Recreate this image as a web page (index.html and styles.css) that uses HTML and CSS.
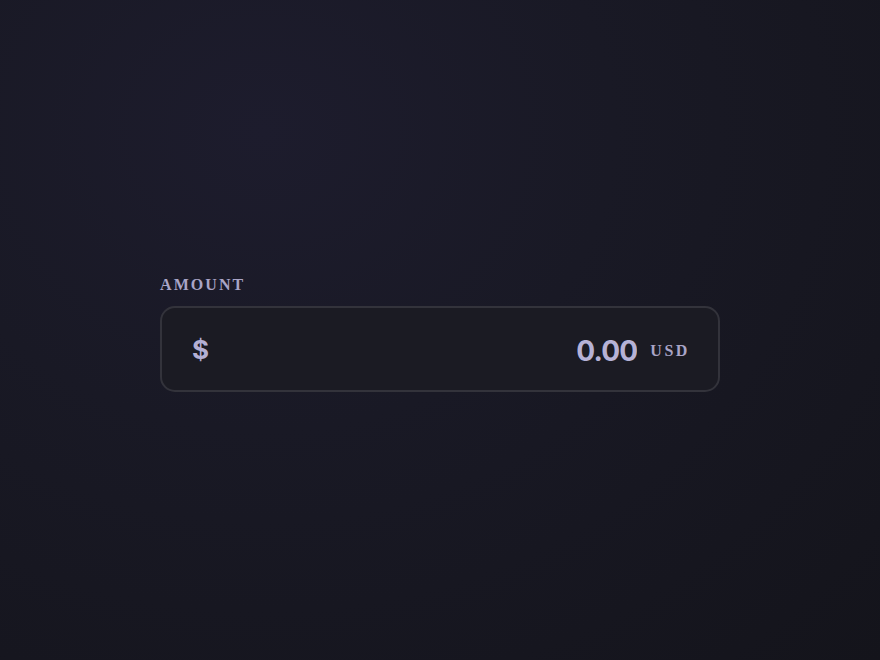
FILE: index.html
```html
<!DOCTYPE html>
<html lang="en">
<head>
    <meta charset="UTF-8">
    <meta name="viewport" content="width=device-width, initial-scale=1.0">
    <title>Amount</title>
    <link rel="stylesheet" href="styles.css">
</head>
<body>

    <div class="field">
        <label class="field-label" for="amount">Amount</label>
        <div class="amount-box">
            <span class="currency-sign">$</span>
            <input class="amount-input" id="amount" type="text" value="0.00">
            <span class="currency-code">USD</span>
        </div>
    </div>

</body>
</html>
```

FILE: styles.css
```css
html, body {
    margin: 0;
    height: 100%;
}

body {
    font-family: 'Inter', 'Noto Sans', sans-serif;
    background-color: #15151d;
    background-image: radial-gradient(ellipse at 30% 20%, #1d1c2d 0%, #191925 40%, #14141b 100%);
    display: flex;
    justify-content: center;
    align-items: center;
}

/* Amount field */
.field {
    width: 560px;
    display: flex;
    flex-direction: column;
    gap: 12px;
    margin-top: 8px;
}

.field-label {
    font-family: 'Liberation Serif', serif;
    font-size: 16px;
    font-weight: bold;
    letter-spacing: 0.13em;
    text-transform: uppercase;
    color: #a9a5c7;
}

.amount-box {
    display: flex;
    align-items: center;
    height: 86px;
    padding: 0 28px 0 30px;
    background: #1b1b23;
    border: 2px solid #33333b;
    border-radius: 15px;
    box-sizing: border-box;
}

.currency-sign {
    font-size: 26px;
    font-weight: 700;
    color: #b4b0d4;
}

.amount-input {
    flex: 1;
    min-width: 0;
    background: transparent;
    border: none;
    outline: none;
    text-align: right;
    font-family: 'Inter', sans-serif;
    font-size: 28px;
    font-weight: 700;
    letter-spacing: -0.03em;
    color: #b6b2d6;
    padding: 0;
    margin-top: 3px;
}

.currency-code {
    margin-left: 13px;
    margin-top: 4px;
    font-family: 'Liberation Serif', serif;
    font-size: 16px;
    font-weight: bold;
    letter-spacing: 0.16em;
    color: #a9a5c7;
}
```
